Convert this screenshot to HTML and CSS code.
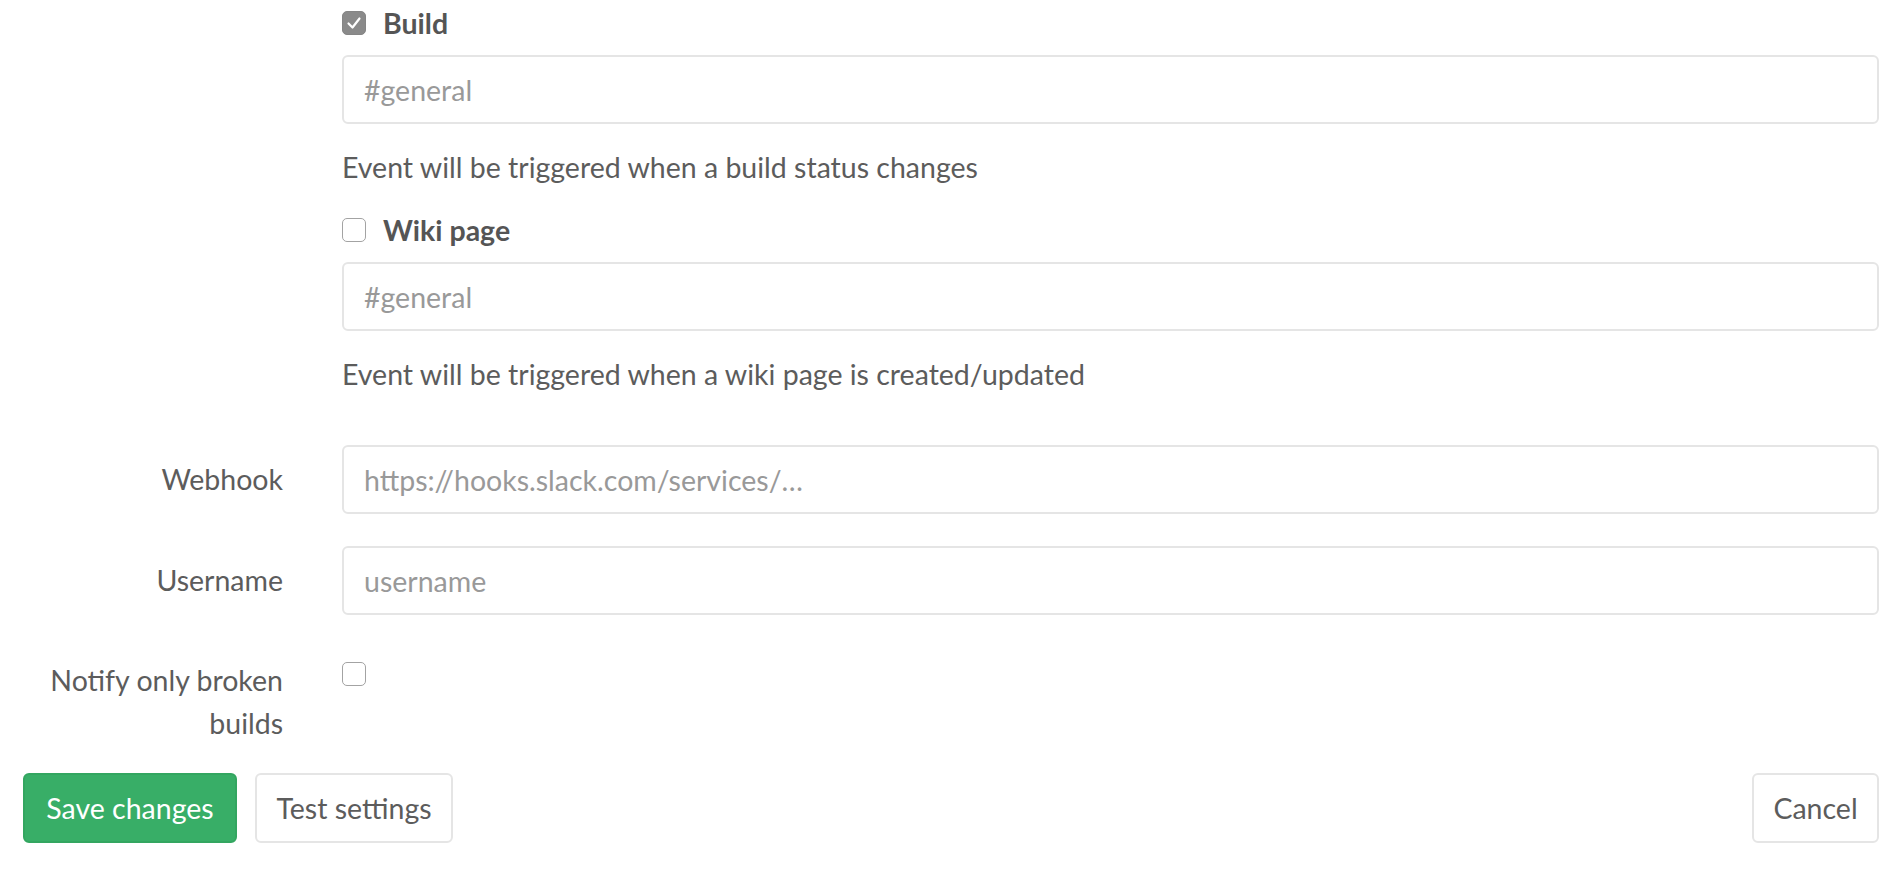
FILE: index.html
```html
<!DOCTYPE html>
<html>
<head>
<meta charset="utf-8">
<link rel="stylesheet" href="styles.css">
</head>
<body>
<form class="form">
  <div class="row">
    <div class="label"></div>
    <div class="control">
      <div class="check-line">
        <span class="box checked"><svg width="24" height="24" viewBox="0 0 24 24"><path d="M6.5 12.5 L10.5 16.5 L17.5 7.5" fill="none" stroke="#fff" stroke-width="2.2" stroke-linecap="round" stroke-linejoin="round"/></svg></span>
        <span class="check-text">Build</span>
      </div>
      <div class="input first"><span class="ph">#general</span></div>
      <div class="help">Event will be triggered when a build status changes</div>
      <div class="check-line wiki">
        <span class="box"></span>
        <span class="check-text">Wiki page</span>
      </div>
      <div class="input first"><span class="ph">#general</span></div>
      <div class="help">Event will be triggered when a wiki page is created/updated</div>
    </div>
  </div>

  <div class="row field webhook">
    <div class="label">Webhook</div>
    <div class="control"><div class="input"><span class="ph">https://hooks.slack.com/services/…</span></div></div>
  </div>

  <div class="row field username">
    <div class="label">Username</div>
    <div class="control"><div class="input"><span class="ph">username</span></div></div>
  </div>

  <div class="row notify">
    <div class="label multi">Notify only broken<br>builds</div>
    <div class="control"><span class="box"></span></div>
  </div>

  <div class="actions">
    <button type="button" class="btn save">Save changes</button>
    <button type="button" class="btn test">Test settings</button>
    <button type="button" class="btn cancel">Cancel</button>
  </div>
</form>
</body>
</html>
```

FILE: styles.css
```css
* { box-sizing: border-box; }
html, body { margin: 0; padding: 0; background: #fff; }
body {
  font-family: "Lato", "Liberation Sans", sans-serif;
  font-size: 28.5px;
  color: #5c5c5c;
}
.form { padding: 0 23px; }
.row { display: flex; gap: 59px; }
.label {
  width: 260px;
  flex: none;
  text-align: right;
  line-height: 43px;
}
.control { flex: 1; min-width: 0; }

.check-line {
  height: 46px;
  display: flex;
  align-items: center;
  gap: 17px;
}
.check-line.wiki { margin-top: 18px; }
.check-text { font-weight: 700; color: #555; }

.box {
  display: inline-block;
  width: 24px;
  height: 24px;
  border: 1.5px solid #a3a3a3;
  border-radius: 5px;
  background: #fff;
  flex: none;
}
.box.checked {
  background: #8a8a8a;
  border-color: #858585;
}
.box.checked svg { display: block; margin: -1.5px; }

.input {
  height: 69px;
  border: 2px solid #e5e5e5;
  border-radius: 6px;
  padding: 0 20px;
  display: flex;
  align-items: center;
}
.input.first { margin-top: 9px; }
.ph { color: #999; }

.help { margin-top: 22px; line-height: 43px; }

.webhook { margin-top: 49px; }
.username { margin-top: 32px; }
.field .label { padding-top: 13px; }

.notify { margin-top: 43px; }
.notify .box { margin-top: -1px; }
.label.multi { padding-top: 1px; }

.actions {
  display: flex;
  gap: 18px;
  margin-top: 28px;
}
.btn {
  font-family: inherit;
  font-size: 28.5px;
  height: 70px;
  padding: 0;
  white-space: nowrap;
  border: 2px solid #e5e5e5;
  border-radius: 6px;
  background: #fff;
  color: #5c5c5c;
}
.btn.save {
  background: #38ae67;
  border-color: #33a660;
  color: #fff;
  width: 214px;
}
.btn.test { width: 198px; }
.btn.cancel { margin-left: auto; width: 127px; }
```
